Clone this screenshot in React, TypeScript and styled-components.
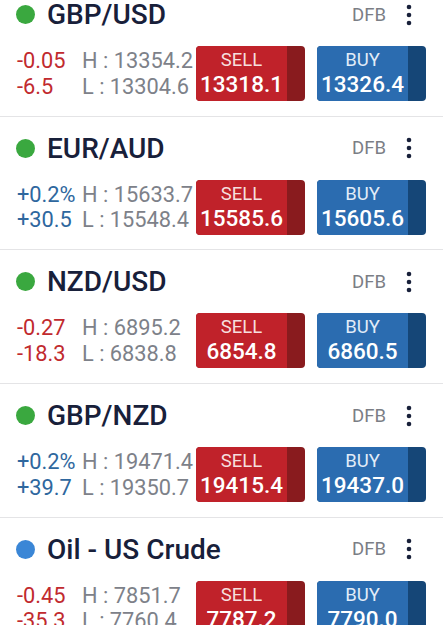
import React from "react";
import styled, { createGlobalStyle } from "styled-components";

interface Market {
  name: string;
  status: "open" | "info";
  change: string;
  points: string;
  high: string;
  low: string;
  sell: string;
  buy: string;
  up: boolean;
}

const markets: Market[] = [
  { name: "GBP/USD", status: "open", change: "-0.05", points: "-6.5", high: "13354.2", low: "13304.6", sell: "13318.1", buy: "13326.4", up: false },
  { name: "EUR/AUD", status: "open", change: "+0.2%", points: "+30.5", high: "15633.7", low: "15548.4", sell: "15585.6", buy: "15605.6", up: true },
  { name: "NZD/USD", status: "open", change: "-0.27", points: "-18.3", high: "6895.2", low: "6838.8", sell: "6854.8", buy: "6860.5", up: false },
  { name: "GBP/NZD", status: "open", change: "+0.2%", points: "+39.7", high: "19471.4", low: "19350.7", sell: "19415.4", buy: "19437.0", up: true },
  { name: "Oil - US Crude", status: "info", change: "-0.45", points: "-35.3", high: "7851.7", low: "7760.4", sell: "7787.2", buy: "7790.0", up: false },
];

const GlobalStyle = createGlobalStyle`
  html, body {
    margin: 0;
    padding: 0;
    background: #ffffff;
    overflow: hidden;
  }
  body {
    font-family: Roboto, "Noto Sans", sans-serif;
  }
`;

// list is scrolled a little, so the first row starts above the top edge
const List = styled.div`
  margin-top: -17px;
  width: 443px;
`;

const Row = styled.div`
  height: 132.7px;
  padding: 0 17px;
  border-bottom: 1px solid #e4e4e6;
  display: flex;
  flex-direction: column;
`;

const Header = styled.div`
  height: 63px;
  display: flex;
  align-items: center;
`;

const StatusDot = styled.span<{ $status: "open" | "info" }>`
  width: 19px;
  height: 19px;
  border-radius: 50%;
  background: ${(p) => (p.$status === "open" ? "#3aa83f" : "#3a86d6")};
  flex-shrink: 0;
  margin-left: -1px;
  margin-right: 12px;
`;

const Title = styled.span`
  font-size: 28px;
  font-weight: 500;
  color: #18203a;
  flex: 1;
`;

const Account = styled.span`
  font-size: 18.5px;
  color: #7b7e85;
  margin-right: 17px;
`;

const Kebab = styled.svg`
  width: 12px;
  height: 26px;
  margin-right: 11px;
`;

const Body = styled.div`
  display: flex;
  align-items: center;
  height: 55px;
`;

const Stats = styled.div`
  flex: 1;
  display: grid;
  grid-template-columns: minmax(63px, auto) auto;
  column-gap: 2px;
  justify-content: start;
  font-size: 21.8px;
  line-height: 25.5px;
`;

const Change = styled.span<{ $up: boolean }>`
  color: ${(p) => (p.$up ? "#2e679e" : "#c12a2e")};
`;

const Range = styled.span`
  color: #7d8189;
  white-space: pre;
`;

const Buttons = styled.div`
  display: flex;
  gap: 12px;
`;

const Deal = styled.button<{ $side: "sell" | "buy" }>`
  width: 109px;
  height: 55px;
  padding: 0;
  border: none;
  border-radius: 4px;
  overflow: hidden;
  display: flex;
  font-family: inherit;
  background: ${(p) => (p.$side === "sell" ? "#891b1e" : "#154677")};
`;

const DealMain = styled.div<{ $side: "sell" | "buy" }>`
  width: 91px;
  height: 100%;
  display: flex;
  flex-direction: column;
  align-items: center;
  padding-top: 3px;
  box-sizing: border-box;
  background: ${(p) => (p.$side === "sell" ? "#c0222a" : "#2b6cb0")};
`;

const DealLabel = styled.span<{ $side: "sell" | "buy" }>`
  font-size: 18.5px;
  line-height: 22px;
  color: ${(p) => (p.$side === "sell" ? "#f6dede" : "#e2ecf8")};
`;

const DealPrice = styled.span`
  font-size: 22.5px;
  font-weight: 500;
  line-height: 26px;
  color: #ffffff;
`;

const MoreIcon = () => (
  <Kebab viewBox="0 0 12 26">
    <circle cx="6" cy="5" r="2.3" fill="#18203a" />
    <circle cx="6" cy="13" r="2.3" fill="#18203a" />
    <circle cx="6" cy="21" r="2.3" fill="#18203a" />
  </Kebab>
);

const MarketRow = ({ m }: { m: Market }) => (
  <Row>
    <Header>
      <StatusDot $status={m.status} />
      <Title>{m.name}</Title>
      <Account>DFB</Account>
      <MoreIcon />
    </Header>
    <Body>
      <Stats>
        <Change $up={m.up}>{m.change}</Change>
        <Range>{`H : ${m.high}`}</Range>
        <Change $up={m.up}>{m.points}</Change>
        <Range>{`L : ${m.low}`}</Range>
      </Stats>
      <Buttons>
        <Deal $side="sell">
          <DealMain $side="sell">
            <DealLabel $side="sell">SELL</DealLabel>
            <DealPrice>{m.sell}</DealPrice>
          </DealMain>
        </Deal>
        <Deal $side="buy">
          <DealMain $side="buy">
            <DealLabel $side="buy">BUY</DealLabel>
            <DealPrice>{m.buy}</DealPrice>
          </DealMain>
        </Deal>
      </Buttons>
    </Body>
  </Row>
);

export default function App() {
  return (
    <>
      <GlobalStyle />
      <List>
        {markets.map((m) => (
          <MarketRow key={m.name} m={m} />
        ))}
      </List>
    </>
  );
}
